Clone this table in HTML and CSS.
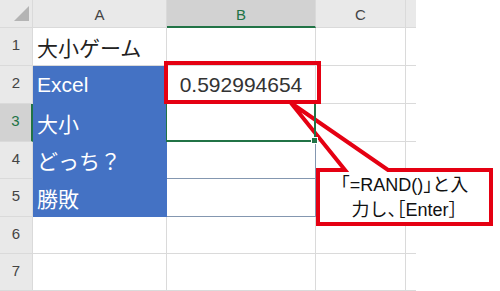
FILE: index.html
```html
<!DOCTYPE html>
<html lang="ja">
<head>
    <meta charset="UTF-8">
    <meta name="viewport" content="width=device-width, initial-scale=1.0">
    <title>大小ゲーム</title>
    <link rel="stylesheet" href="styles.css">
</head>
<body>
    <div class="page">
        <div class="sheet">
            <!-- 列見出し -->
            <div class="corner"><span class="corner-mark"></span></div>
            <div class="colhead">A</div>
            <div class="colhead is-active">B</div>
            <div class="colhead">C</div>
            <div class="colhead edge"></div>

            <!-- 1行目 -->
            <div class="rowhead">1</div>
            <div class="cell">大小ゲーム</div>
            <div class="cell"></div>
            <div class="cell"></div>
            <div class="cell edge"></div>

            <!-- 2行目 -->
            <div class="rowhead">2</div>
            <div class="cell fill">Excel</div>
            <div class="cell num">0.592994654</div>
            <div class="cell"></div>
            <div class="cell edge"></div>

            <!-- 3行目（B3を選択中） -->
            <div class="rowhead is-active">3</div>
            <div class="cell fill">大小</div>
            <div class="cell is-active"></div>
            <div class="cell"></div>
            <div class="cell edge"></div>

            <!-- 4行目 -->
            <div class="rowhead">4</div>
            <div class="cell fill">どっち？</div>
            <div class="cell boxed"></div>
            <div class="cell"></div>
            <div class="cell edge"></div>

            <!-- 5行目 -->
            <div class="rowhead">5</div>
            <div class="cell fill">勝敗</div>
            <div class="cell boxed"></div>
            <div class="cell"></div>
            <div class="cell edge"></div>

            <!-- 6行目 -->
            <div class="rowhead">6</div>
            <div class="cell"></div>
            <div class="cell"></div>
            <div class="cell"></div>
            <div class="cell edge"></div>

            <!-- 7行目 -->
            <div class="rowhead">7</div>
            <div class="cell"></div>
            <div class="cell"></div>
            <div class="cell"></div>
            <div class="cell edge"></div>
        </div>

        <!-- B2の赤枠 -->
        <div class="highlight"></div>

        <!-- 吹き出し -->
        <div class="callout">
            <svg class="callout-shape" width="215" height="128" viewBox="280 100 215 128">
                <path d="M318 170 H345 L291 103 L388 170 H491 V224 H318 Z"
                      fill="#fff" stroke="#e50012" stroke-width="4"/>
            </svg>
            <p class="callout-text">「=RAND()」と入<br>力し、［Enter］</p>
        </div>
    </div>
</body>
</html>
```

FILE: styles.css
```css
body {
    margin: 0;
    background-color: #fff;
    font-family: "Liberation Sans", "Noto Sans CJK JP", sans-serif;
}

.page {
    position: relative;
    width: 500px;
    height: 291px;
    overflow: hidden;
}

.sheet {
    display: grid;
    grid-template-columns: 33px 134px 149px 90px 10px;
    grid-template-rows: 28px 38px 38px 38px 37px 38px 37px 37px;
    width: 416px;
}

.sheet > div {
    box-sizing: border-box;
    display: flex;
    align-items: center;
    border-right: 1px solid #dadada;
    border-bottom: 1px solid #dadada;
}

.sheet > .edge {
    border-right: none;
}

/* 見出し */
.corner,
.colhead,
.rowhead {
    background-color: #e9e9e9;
    color: #444;
    font-size: 15px;
}

.corner {
    align-items: flex-end;
    justify-content: flex-end;
    padding: 0 3px 1px 0;
    border-right-color: #ababab;
    border-bottom-color: #ababab;
}

.corner-mark {
    width: 0;
    height: 0;
    border-left: 15px solid transparent;
    border-bottom: 15px solid #b4b4b4;
}

.colhead {
    justify-content: center;
    padding-top: 2px;
    border-right-color: #cfcfcf;
    border-bottom-color: #ababab;
}

.colhead.is-active {
    background-color: #d2d2d2;
    color: #217346;
    border-bottom: 2px solid #217346;
}

.rowhead {
    justify-content: center;
    align-items: flex-end;
    padding-bottom: 4px;
    border-right-color: #ababab;
    border-bottom-color: #cfcfcf;
}

.rowhead.is-active {
    background-color: #d2d2d2;
    color: #217346;
    border-right: 2px solid #217346;
}

/* セル */
.cell {
    padding-left: 4px;
    font-size: 21px;
    color: #222;
    white-space: nowrap;
}

.cell.fill {
    background-color: #4472c4;
    color: #fff;
    border-color: #4472c4;
}

.cell.num {
    justify-content: center;
    padding-left: 0;
    color: #333;
}

.cell.boxed {
    border-right-color: #8497b0;
    border-bottom-color: #8497b0;
}

.cell.is-active {
    position: relative;
    z-index: 1;
    border-right: 2px solid #217346;
    border-bottom: 2px solid #217346;
    box-shadow: -1px 0 0 #217346;
}

/* フィルハンドル */
.cell.is-active::after {
    content: "";
    position: absolute;
    right: -4px;
    bottom: -4px;
    width: 5px;
    height: 5px;
    background-color: #217346;
    border: 1px solid #fff;
}

.highlight {
    position: absolute;
    left: 164px;
    top: 61px;
    width: 157px;
    height: 43px;
    box-sizing: border-box;
    border: 4px solid #e50012;
}

.callout {
    position: absolute;
    left: 316px;
    top: 168px;
    width: 177px;
    height: 58px;
    display: flex;
    align-items: center;
    justify-content: center;
}

.callout-shape {
    position: absolute;
    left: -36px;
    top: -68px;
}

.callout-text {
    position: relative;
    margin: 0;
    padding-top: 2px;
    font-size: 18px;
    line-height: 25px;
    text-align: center;
    color: #111;
    font-feature-settings: "halt";
}
```
